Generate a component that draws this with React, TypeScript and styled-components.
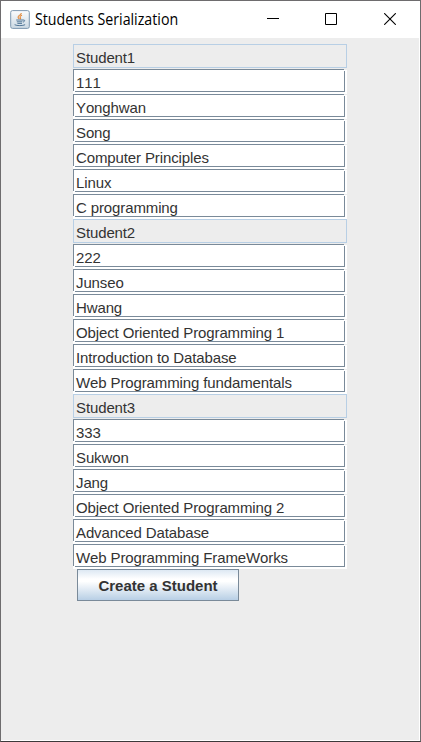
import React from "react";
import styled, { createGlobalStyle, css } from "styled-components";

const GlobalStyle = createGlobalStyle`
  body { margin: 0; overflow: hidden; background: #ededed; }
  * { box-sizing: border-box; }
`;

const Window = styled.div`
  width: 421px;
  height: 742px;
  display: flex;
  flex-direction: column;
  border: 1px solid #6e6c6e;
  border-bottom-color: #3c3a3b;
  background: #fff;
`;

const TitleBar = styled.header`
  height: 37px;
  flex: none;
  display: flex;
  align-items: center;
  padding-left: 9px;
  background: #fff;
`;

const Title = styled.h1`
  margin: 0 0 2px 5px;
  flex: 1;
  font: 400 16px/20px "Open Sans", "Noto Sans", sans-serif;
  color: #000;
  white-space: nowrap;
`;

const TitleText = styled.span`
  display: inline-block;
  transform: scaleX(0.888);
  transform-origin: left;
`;

const Controls = styled.div`
  display: flex;
  flex: none;
`;

const ControlButton = styled.button<{ $width?: number }>`
  width: ${({ $width = 58 }) => $width}px;
  height: 37px;
  padding: 12px 0 0;
  border: 0;
  background: none;
  display: flex;
  align-items: flex-start;
  justify-content: center;
`;

const Content = styled.main`
  flex: 1;
  margin: 0 1px 1px 0;
  padding: 6px 0 0 72px;
  background: #ededed;
`;

const List = styled.div`
  width: 274px;
  display: grid;
  grid-auto-rows: 25px;
`;

const fieldText = css`
  font: 400 15px/26px "Liberation Sans", Arial, sans-serif;
  font-kerning: none;
  letter-spacing: -0.12px;
  color: #333;
  white-space: nowrap;
`;

const Heading = styled.div`
  ${fieldText}
  height: 24px;
  padding-left: 2px;
  border: 1px solid #b8cfe5;
`;

const Field = styled.div`
  ${fieldText}
  height: 25px;
  padding-left: 3px;
  background:
    linear-gradient(#7a8a99, #7a8a99) 0 0 / 271px 1px,
    linear-gradient(#7a8a99, #7a8a99) 0 0 / 1px 22px,
    linear-gradient(#7a8a99, #7a8a99) 2px 22px / 270px 1px,
    linear-gradient(#7a8a99, #7a8a99) 271px 2px / 1px 21px,
    linear-gradient(#ededed, #ededed) 271px 0 / 3px 1px,
    #fff;
  background-repeat: no-repeat;
  line-height: 28px;
`;

const CreateButton = styled.button`
  display: block;
  width: 162px;
  height: 32px;
  margin-left: 4px;
  padding: 1px 0 0;
  border: 1px solid #7a8a99;
  border-radius: 0;
  background: linear-gradient(#dde8f3 0%, #fff 30%, #fff 38%, #b8cfe5 100%);
  font: 700 15px/30px "Liberation Sans", Arial, sans-serif;
  color: #333;
`;

const JavaIcon = () => (
  <svg width="20" height="19" viewBox="0 0 20 19" fill="none">
    <defs>
      <linearGradient id="tile" x2="0" y2="1">
        <stop stopColor="#fbfcfd" />
        <stop offset="1" stopColor="#cbd8e3" />
      </linearGradient>
    </defs>
    <rect x=".7" y=".6" width="18.6" height="17.8" rx="1.8" fill="url(#tile)" stroke="#7e98b0" />
    <path d="M11.3 3c.4 2-3.6 2.3-3.2 4.3.1 .7.9 1.2 1.2 1.8M12 5.3c-2.4 1-2.4 1.7-1.5 2.6.3.4.1.9-.4 1.3" stroke="#e38a3c" strokeWidth="1.1" />
    <path d="M6.2 10h6.8M6.8 11.8h5.6M7.4 13.4h4.6M13 10.1c2.2-.7 2.2 1.5 0 2M4.6 14.7c2.2 1.2 8.3 1.2 10.5 0" stroke="#527798" strokeWidth="1" />
  </svg>
);

const students = [
  ["Student1", "111", "Yonghwan", "Song", "Computer Principles", "Linux", "C programming"],
  ["Student2", "222", "Junseo", "Hwang", "Object Oriented Programming 1", "Introduction to Database", "Web Programming fundamentals"],
  ["Student3", "333", "Sukwon", "Jang", "Object Oriented Programming 2", "Advanced Database", "Web Programming FrameWorks"],
];

export default function App() {
  return (
    <Window>
      <GlobalStyle />
      <TitleBar>
        <JavaIcon />
        <Title><TitleText>Students Serialization</TitleText></Title>
        <Controls>
          <ControlButton aria-label="Minimize">
            <svg width="12" height="12" stroke="#000" fill="none"><path d="M0 5.5h12" /></svg>
          </ControlButton>
          <ControlButton aria-label="Maximize">
            <svg width="12" height="12" stroke="#000" fill="none"><path d="M.5 .5h11v11H.5z" /></svg>
          </ControlButton>
          <ControlButton $width={60} aria-label="Close">
            <svg width="12" height="12" stroke="#000" strokeWidth="1.1" fill="none"><path d="M.2 .2l11.6 11.6M11.8 .2L.2 11.8" /></svg>
          </ControlButton>
        </Controls>
      </TitleBar>
      <Content>
        <List>
          {students.map(([name, ...values]) => (
            <React.Fragment key={name}>
              <Heading>{name}</Heading>
              {values.map((value) => <Field key={value}>{value}</Field>)}
            </React.Fragment>
          ))}
        </List>
        <CreateButton>Create a Student</CreateButton>
      </Content>
    </Window>
  );
}
